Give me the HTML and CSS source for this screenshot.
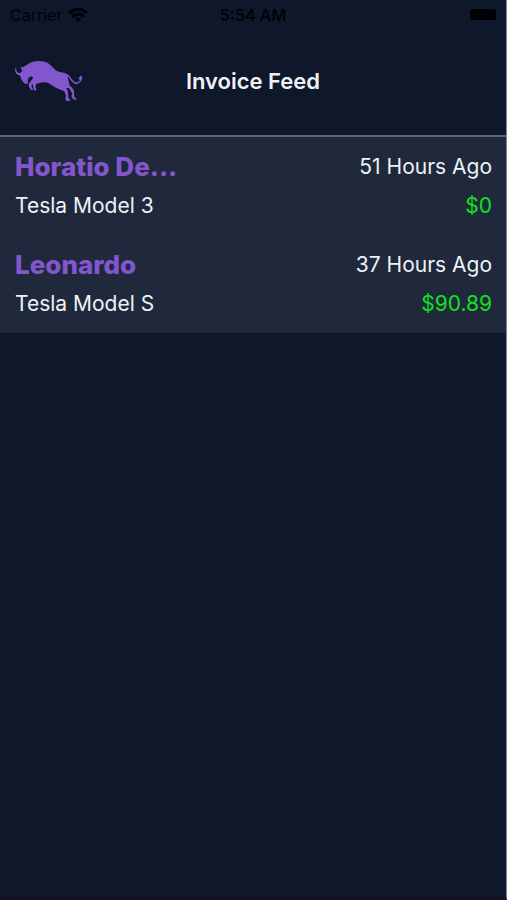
FILE: index.html
```html
<!DOCTYPE html>
<html lang="en">
<head>
<meta charset="utf-8">
<meta name="viewport" content="width=device-width, initial-scale=1">
<title>Invoice Feed</title>
<link rel="stylesheet" href="styles.css">
</head>
<body>
<div class="app">
  <div class="status">
    <div class="carrier">
      <span>Carrier</span>
      <svg width="20" height="14" viewBox="0 0 20 14" fill="none" stroke="#000207" stroke-width="3" aria-hidden="true">
        <path d="M1 5Q10-3 19 5"/>
        <path d="M4 9Q10 3 16 9"/>
        <path d="M7 11Q10 8 13 11L10 14Z" fill="#000207" stroke="none"/>
      </svg>
    </div>
    <time>5:54 AM</time>
    <div class="power"><span class="battery"></span></div>
  </div>
  <header class="header">
    <svg class="logo" viewBox="20 20 204 126" fill="#8257ce" aria-hidden="true">
      <path d="M23 41C17 52 22 64 34 66L37 71C38 78 43 85 49 91L58 91C60 86 58 81 58 77L65 70C72 68 75 71 73 76L61 91C60 98 63 105 69 110L75 109L70 101L70 95L74 92C74 99 75 107 78 112L85 109L81 99L84 91C94 88 104 86 114 87C124 91 132 97 144 104L159 110L168 114L173 127L171 136L175 143L184 143L185 138L180 134L179 116L174 104L182 104L187 112L192 121L189 129L194 138L203 140L205 136L198 131L197 123L197 112L190 102L183 95L181 84L179 75L178 68C184 76 190 86 200 91C208 94 218 87 221 78L222 70L216 67L210 76L216 80C211 87 204 89 198 85C190 80 186 68 177 63C167 56 157 58 147 54C134 46 128 32 112 26C91 20 68 23 54 36L45 41L36 42L42 52L36 59C27 61 22 52 24 43Z"/>
    </svg>
    <h1>Invoice Feed</h1>
  </header>
  <ul class="feed">
    <li class="invoice">
      <h2>Horatio De...</h2><span class="age">51 Hours Ago</span>
      <span class="car">Tesla Model 3</span><span class="amount">$0</span>
    </li>
    <li class="invoice">
      <h2>Leonardo</h2><span class="age">37 Hours Ago</span>
      <span class="car">Tesla Model S</span><span class="amount">$90.89</span>
    </li>
  </ul>
</div>
</body>
</html>
```
FILE: styles.css
```css
* { box-sizing: border-box; }
body {
  margin: 0;
  background: #0f172a;
  color: #edf2f8;
  font-family: Inter, "Liberation Sans", sans-serif;
  font-size: 21px;
}
.app {
  min-height: 100vh;
  border-right: 1px solid #7c828e;
  border-bottom: 3px solid #0e1024;
}
.status {
  display: grid;
  grid-template-columns: 1fr auto 1fr;
  align-items: center;
  height: 29px;
  padding: 0 10px;
  color: #000207;
  font-size: 16px;
}
.status time { font-weight: 600; }
.carrier {
  display: flex;
  align-items: center;
  gap: 6px;
}
.power {
  display: flex;
  justify-content: flex-end;
}
.battery {
  width: 26px;
  height: 11px;
  border-radius: 3px;
  background: #000105;
}
.header {
  display: grid;
  grid-template-columns: 1fr auto 1fr;
  align-items: center;
  height: 108px;
  padding: 0 15px 2px;
  border-bottom: 2px solid #5b6475;
}
.logo {
  width: 68px;
  height: 42px;
}
h1 {
  margin: 0;
  font-size: 22px;
  line-height: 28px;
  font-weight: 600;
}
.feed {
  margin: 0;
  padding: 0;
  list-style: none;
  background: #1f293b;
}
.invoice {
  display: grid;
  grid-template-columns: 1fr auto;
  align-items: center;
  row-gap: 7px;
  padding: 14px 14px 13px 15px;
  line-height: 32px;
}
h2 {
  margin: 0;
  color: #8257ce;
  font-size: 26px;
  font-weight: 800;
}
.age,
.amount { text-align: right; }
.amount { color: #12e01e; }
```
